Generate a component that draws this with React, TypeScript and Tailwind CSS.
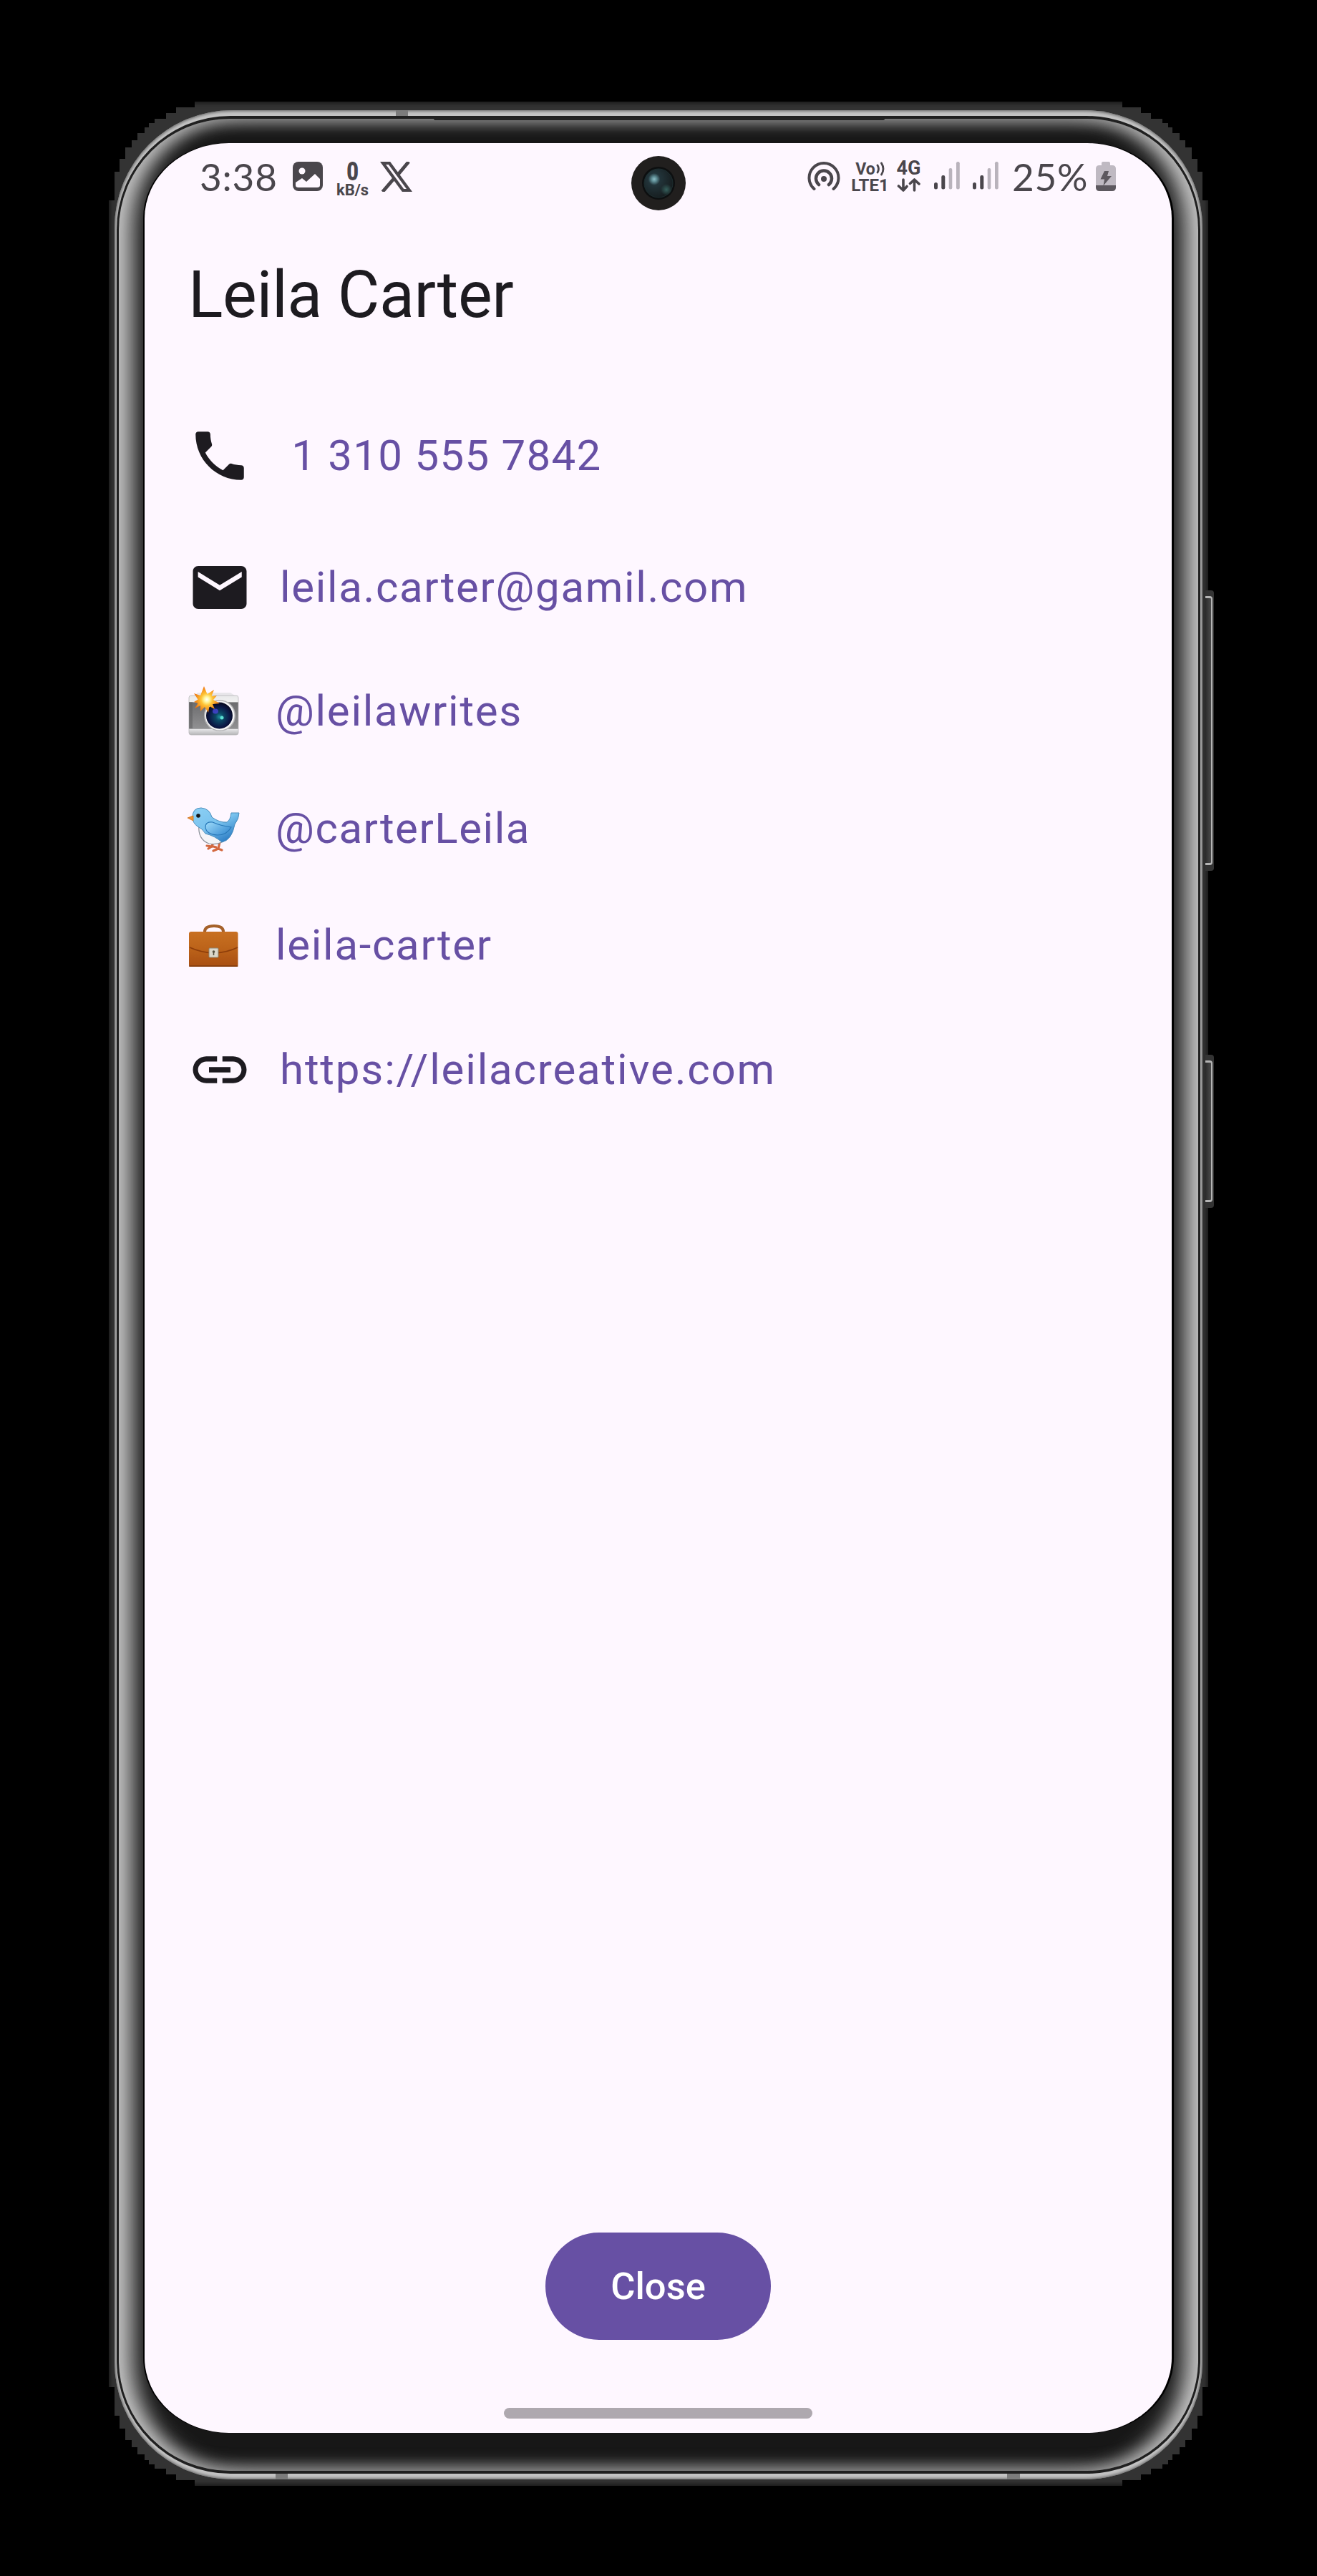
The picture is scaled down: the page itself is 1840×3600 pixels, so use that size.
import React from "react";

// Stepped corner of the outer shade, from the left edge up to the top edge.
const STEPS: [number, number][] = [
  [0, 138], [8, 138], [8, 98], [15, 98], [15, 80], [23, 80], [23, 64], [32, 64],
  [32, 54], [40, 54], [40, 44], [50, 44], [50, 36], [56, 36], [56, 30], [64, 30],
  [64, 24], [80, 24], [80, 16], [94, 16], [94, 8], [120, 8], [120, 0],
];
const SHADE_W = 1536;
const SHADE_H = 3332;

function shadeOutline() {
  const back = [...STEPS].reverse();
  const points = [
    ...STEPS,
    ...back.map(([x, y]) => [SHADE_W - x, y]),
    ...STEPS.map(([x, y]) => [SHADE_W - x, SHADE_H - y]),
    ...back.map(([x, y]) => [x, SHADE_H - y]),
  ];
  return `polygon(${points.map(([x, y]) => `${x}px ${y}px`).join(", ")})`;
}

function SideKey({ className }: { className: string }) {
  return (
    <div className={`absolute left-[1532px] w-[12px] rounded-r-[4px] bg-[#333] py-[8px] pr-[2px] ${className}`}>
      <div className="h-full w-full rounded-r-[4px] border-y-[3px] border-r-[2px] border-[#b4b4b4] bg-linear-to-r from-[#2c2c2c] to-[#4a4a4a]" />
    </div>
  );
}

function PictureIcon() {
  return (
    <svg className="h-[41px] w-[42px]" viewBox="0 0 42 41">
      <rect width="42" height="41" rx="8" fill="#4a464c" />
      <circle cx="13" cy="13" r="4.5" fill="#fef7ff" />
      <path d="M4 29 L13 23 L19 28 L31 17 L38 24 V33 Q38 36 34 36 H8 Q4 36 4 33 Z" fill="#fef7ff" />
    </svg>
  );
}

function XLogo() {
  return (
    <svg className="h-[42px] w-[45px]" viewBox="0 0 45 42" fill="none" stroke="#4a464c">
      <path d="M4 2 H13 L41 40 H32 Z" strokeWidth="4.2" />
      <path d="M40 0 L25 18 M19 24 L3.500 42" strokeWidth="4.800" />
    </svg>
  );
}

function Hotspot() {
  return (
    <svg className="h-[42px] w-[46px]" viewBox="0 0 46 42" fill="none" stroke="#4a464c" strokeLinecap="round">
      <circle cx="23" cy="24" r="4" fill="#4a464c" stroke="none" />
      <path d="M16 32 A11 11 0 1 1 30 32" strokeWidth="4.5" />
      <path d="M9.500 38 A20.500 20.500 0 1 1 36.500 38" strokeWidth="4" />
    </svg>
  );
}

function Signal() {
  return (
    <svg className="h-[39px] w-[36px]" viewBox="0 0 36 39">
      <rect x="0" y="29" width="5" height="9.500" rx="2.500" fill="#4a464c" />
      <rect x="10.300" y="19" width="5" height="19.500" rx="2.200" fill="#4a464c" />
      <rect x="20.700" y="9" width="4.600" height="29.500" rx="2.200" fill="#b9b3bc" />
      <rect x="31" y="0" width="4.800" height="38.500" rx="2.200" fill="#b9b3bc" />
    </svg>
  );
}

function Battery() {
  return (
    <svg className="h-[41px] w-[28px]" viewBox="0 0 28 41">
      <path d="M8 5 V2 Q8 0 10 0 H18 Q20 0 20 2 V5 H23 Q28 5 28 10 V33 H0 V10 Q0 5 5 5 Z" fill="#bfb9c2" />
      <path d="M0 33 H28 V36 Q28 41 23 41 H5 Q0 41 0 36 Z" fill="#5d585f" />
      <path d="M12 13 H18 L16 20 H22 L10.500 33.500 L12 24.500 H6.500 Z" fill="#5d585f" />
    </svg>
  );
}

function DataArrows() {
  return (
    <svg className="h-[19px] w-[33px]" viewBox="0 0 33 19" fill="none" stroke="#4a464c" strokeWidth="3.6" strokeLinecap="round" strokeLinejoin="round">
      <path d="M9 2 V17 M2.500 11 L9 17 L14 11.500" />
      <path d="M24.500 17 V2 M18.500 7.500 L24.500 2 L31 8" />
    </svg>
  );
}

function CameraHole() {
  return (
    <svg className="absolute left-[680px] top-[18px] h-[76px] w-[76px]" viewBox="0 0 76 76">
      <defs>
        <radialGradient id="lens" cx="0.35" cy="0.36" r="0.7">
          <stop offset="0" stopColor="#8fc0c8" />
          <stop offset="0.13" stopColor="#5c8a92" />
          <stop offset="0.3" stopColor="#22343a" />
          <stop offset="1" stopColor="#161c1e" />
        </radialGradient>
        <radialGradient id="lensGlow">
          <stop offset="0" stopColor="#35605c" />
          <stop offset="1" stopColor="#35605c" stopOpacity="0" />
        </radialGradient>
      </defs>
      <circle cx="38" cy="38" r="38" fill="#211f1e" />
      <circle cx="38" cy="38" r="23" fill="#0d0f10" />
      <circle cx="38" cy="38" r="20" fill="url(#lens)" stroke="#1d2e30" strokeWidth="1" />
      <circle cx="49" cy="47" r="8" fill="url(#lensGlow)" />
    </svg>
  );
}

function StatusBar() {
  return (
    <div className="flex h-[96px] items-start justify-between pl-[77px] pr-[78px] pt-[26px] text-[#4a464c]">
      <div className="flex items-start">
        <span className="w-[108px] whitespace-nowrap font-['Lato'] text-[53px] leading-[41px] tracking-[0.800px]">3:38</span>
        <div className="ml-[22px]"><PictureIcon /></div>
        <div className="ml-[19px] flex w-[45px] flex-col items-center font-['Roboto'] font-bold">
          <span className="scale-x-[0.78] text-[37px] font-black leading-[27px]">0</span>
          <span className="mt-[4px] text-[22px] leading-[17px]">kB/s</span>
        </div>
        <div className="ml-[16px]"><XLogo /></div>
      </div>
      <div className="flex items-start">
        <Hotspot />
        <div className="ml-[17px] flex w-[49px] flex-col items-center font-['Roboto'] font-bold">
          <span className="flex items-center gap-[1px] text-[23px] leading-[19px]">
            Vo
            <svg className="h-[20px] w-[12px]" viewBox="0 0 12 20" fill="none" stroke="#4a464c" strokeWidth="2.800" strokeLinecap="round">
              <path d="M2 5 Q5 10 2 15 M7.500 2 Q12.500 10 7.500 18" />
            </svg>
          </span>
          <span className="mt-[4px] text-[24px] leading-[18px]">LTE1</span>
        </div>
        <div className="ml-[13px] flex w-[33px] flex-col items-center font-['Roboto'] font-bold">
          <span className="text-[27px] leading-[19px]">4G</span>
          <div className="mt-[4px]"><DataArrows /></div>
        </div>
        <div className="ml-[19px]"><Signal /></div>
        <div className="ml-[18px]"><Signal /></div>
        <span className="ml-[19px] w-[109px] whitespace-nowrap font-['Lato'] text-[53px] leading-[41px] tracking-[0.800px]">25%</span>
        <div className="ml-[8px]"><Battery /></div>
      </div>
    </div>
  );
}

function PhoneIcon() {
  return (
    <svg className="h-[90px] w-[90px]" viewBox="0 0 24 24" fill="#1d1b20">
      <path d="M6.620 10.790c1.440 2.830 3.760 5.140 6.590 6.590l2.200-2.200c.27-.27.67-.36 1.020-.24 1.120.37 2.330.57 3.570.57.550 0 1 .45 1 1V20c0 .550-.45 1-1 1C10.610 21 3 13.390 3 4c0-.55.45-1 1-1h3.500c.550 0 1 .45 1 1 0 1.250.2 2.450.57 3.570.11.350.03.740-.25 1.020l-2.200 2.200z" />
    </svg>
  );
}

function MailIcon() {
  return (
    <svg className="h-[90px] w-[90px]" viewBox="0 0 24 24" fill="#1d1b20">
      <path d="M20 4H4c-1.100 0-1.990.9-1.990 2L2 18c0 1.100.9 2 2 2h16c1.100 0 2-.9 2-2V6c0-1.100-.9-2-2-2zm.2 4.100L12 13.100 3.900 8.100V6.100L12 11.100l8.200-5z" />
    </svg>
  );
}

function LinkIcon() {
  return (
    <svg className="h-[90px] w-[90px]" viewBox="0 0 24 24" fill="#1d1b20">
      <path d="M3.900 12c0-1.710 1.390-3.100 3.100-3.100h4V7H7c-2.760 0-5 2.240-5 5s2.240 5 5 5h4v-1.900H7c-1.710 0-3.100-1.390-3.100-3.100zM8 13h8v-2H8v2zm9-6h-4v1.900h4c1.710 0 3.100 1.390 3.100 3.100s-1.390 3.100-3.100 3.100h-4V17h4c2.760 0 5-2.240 5-5s-2.240-5-5-5z" />
    </svg>
  );
}

function CameraEmoji() {
  return (
    <svg className="h-[70px] w-[74px]" viewBox="0 0 74 70">
      <defs>
        <linearGradient id="camBody" x1="0" y1="0" x2="0" y2="1">
          <stop offset="0" stopColor="#e9e9ea" />
          <stop offset="0.16" stopColor="#f0f0f0" />
          <stop offset="0.18" stopColor="#6c6c6e" />
          <stop offset="0.84" stopColor="#909092" />
          <stop offset="0.86" stopColor="#e4e4e6" />
          <stop offset="1" stopColor="#b5b5b7" />
        </linearGradient>
        <radialGradient id="camLens" cx="0.5" cy="0.55" r="0.55">
          <stop offset="0" stopColor="#1d8f9c" />
          <stop offset="0.25" stopColor="#0c4a66" />
          <stop offset="0.7" stopColor="#0b1846" />
          <stop offset="1" stopColor="#06071c" />
        </radialGradient>
        <radialGradient id="camFlash">
          <stop offset="0" stopColor="#ffffff" />
          <stop offset="0.2" stopColor="#fff7a0" />
          <stop offset="0.45" stopColor="#ffc436" />
          <stop offset="1" stopColor="#ee7410" />
        </radialGradient>
      </defs>
      <path d="M8 15 L14 9 H60 L66 13 Z" fill="#e8e6ea" />
      <rect x="2" y="13" width="69" height="55" rx="3" fill="url(#camBody)" stroke="#b9b7ba" strokeWidth="0.800" />
      <rect x="2" y="22" width="5" height="37" fill="#58585a" opacity="0.5" />
      <circle cx="45" cy="41" r="22" fill="#b4b4b6" />
      <circle cx="45" cy="41" r="20.500" fill="#f5f5f6" />
      <circle cx="44.500" cy="41" r="18.500" fill="url(#camLens)" />
      <ellipse cx="39" cy="35" rx="4" ry="3.500" fill="#4c45dd" opacity="0.750" />
      <circle cx="48" cy="44" r="2.500" fill="#5ce0d2" />
      <path d="M23 0 L27.500 11 L37 5 L33.500 14 L41 13 L36 19 L45 24 L35 25 L38 32 L30.500 28 L29 37 L24 29 L18 35 L18 27 L10 31 L14.500 24 L9 22 L14.500 18.500 L9 10 L18 13 Z" fill="url(#camFlash)" />
    </svg>
  );
}

function BirdEmoji() {
  return (
    <svg className="h-[70px] w-[74px]" viewBox="0 0 74 70">
      <defs>
        <linearGradient id="birdBody" x1="0" y1="0" x2="0.7" y2="1">
          <stop offset="0" stopColor="#8cd0f4" />
          <stop offset="0.55" stopColor="#79c2ee" />
          <stop offset="1" stopColor="#2b7cc4" />
        </linearGradient>
        <linearGradient id="birdWing" x1="0" y1="0" x2="1" y2="0.7">
          <stop offset="0" stopColor="#a0dcfa" />
          <stop offset="1" stopColor="#3c90d4" />
        </linearGradient>
      </defs>
      <path d="M36 54 L34 60 L27 59 M34 60 L29 63 M45 54 L43 63 L36 66 M43 63 L48 65 M36 60 L40 61" fill="none" stroke="#d3683f" strokeWidth="3.200" strokeLinecap="round" />
      <path d="M16 30 Q14 50 30 56 Q45 59 56 48 L30 33 Z" fill="#f4f5f8" stroke="#8b9099" strokeWidth="1.200" />
      <path d="M7 19 Q7 6 19 6 Q31 7 34 19 Q45 27 55 26 Q60 23 61 13 L72 13 Q72 21 66 29 Q62 51 48 54 Q38 45 25 42 Q21 35 14 32 Q7 27 7 19 Z" fill="url(#birdBody)" stroke="#4a8dbb" strokeWidth="1" />
      <path d="M25 33 Q25 25 35 26 Q46 31 61 33 Q55 44 42 44 Q26 43 25 33 Z" fill="url(#birdWing)" stroke="#2878b8" strokeWidth="1.200" />
      <path d="M8 17 L0 20 L8 24 Z" fill="#f0922f" stroke="#c97120" strokeWidth="0.800" />
      <circle cx="15" cy="17" r="2.800" fill="#161616" />
    </svg>
  );
}

function BriefcaseEmoji() {
  return (
    <svg className="h-[70px] w-[74px]" viewBox="0 0 74 70">
      <defs>
        <linearGradient id="caseBody" x1="0" y1="0" x2="0" y2="1">
          <stop offset="0" stopColor="#c87022" />
          <stop offset="0.45" stopColor="#bd641a" />
          <stop offset="1" stopColor="#a84e12" />
        </linearGradient>
      </defs>
      <path d="M24 16 Q24 8 37 8 Q50 8 50 16" fill="none" stroke="#a5612a" strokeWidth="4" />
      <rect x="2" y="16" width="68.500" height="49" rx="3" fill="url(#caseBody)" />
      <path d="M3 38 Q18 45 37 46 Q56 45 70 38" fill="none" stroke="#8d3d0a" strokeWidth="1.800" />
      <rect x="2" y="63" width="68.500" height="2" rx="1" fill="#8a400e" />
      <rect x="30" y="39" width="13" height="13" rx="1" fill="#dcd8cc" stroke="#8d8470" strokeWidth="1" />
      <circle cx="36.500" cy="44" r="1.800" fill="#55503f" />
      <rect x="35.700" y="44" width="1.600" height="5" fill="#55503f" />
    </svg>
  );
}

function ContactRow({
  icon,
  text,
  tracking,
  emoji = false,
}: {
  icon: React.ReactNode;
  text: string;
  tracking: string;
  emoji?: boolean;
}) {
  return (
    <div className={emoji ? "flex h-[90px] items-center gap-[49px]" : "flex h-[110px] items-center gap-[39px]"}>
      {icon}
      <a className={`whitespace-pre text-[60px] leading-[90px] text-[#6750a4] ${tracking}`}>{text}</a>
    </div>
  );
}

export default function App() {
  return (
    <div className="h-[3600px] w-[1840px] overflow-hidden bg-black pl-[152px] pt-[142px] font-['Roboto',sans-serif]">
      <div className="relative h-[3332px] w-[1536px] px-[8px] pb-[9px] pt-[12px]">
        <div
          className="absolute inset-0 bg-[#333333] shadow-[inset_0_0_6px_2px_#161616]"
          style={{ clipPath: shadeOutline() }}
        />
        <SideKey className="top-[683px] h-[392px]" />
        <SideKey className="top-[1332px] h-[214px]" />

        {/* Metal rim */}
        <div className="relative h-[3311px] w-[1520px] rounded-[164px] bg-[#c4c4c4] px-[3px] py-[8px] shadow-[inset_0_0_4px_1px_#5c5c5c]">
          <div className="absolute left-[393px] top-0 h-[8px] w-[17px] bg-[#7c7c7c]" />
          <div className="absolute bottom-0 left-[225px] h-[8px] w-[17px] bg-[#7c7c7c]" />
          <div className="absolute bottom-0 left-[1247px] h-[8px] w-[18px] bg-[#7c7c7c]" />
          <div className="h-full w-full rounded-[159px] bg-[#202020] px-[3px] py-[4px]">
            {/* Bevel between the rim and the display */}
            <div className="relative h-full w-full rounded-[155px] bg-[#171717] px-[34px] pb-[53px] pt-[34px] shadow-[inset_34px_0_30px_-14px_#c2c2c2,inset_-34px_0_30px_-14px_#c2c2c2,inset_0_19px_20px_-10px_#6a6a6a,inset_0_-19px_20px_-10px_#6a6a6a]">
              <div className="absolute left-[440px] top-[-2px] h-[4px] w-[630px] rounded-full bg-[#222222]" />
              <div className="h-full w-full rounded-[118px/105px] bg-black pl-[2px] pr-[3px]">
                <div className="relative flex h-full w-full flex-col overflow-hidden rounded-[118px/105px] bg-[#fef7ff]">
                  <StatusBar />
                  <CameraHole />
                  <main className="flex flex-1 flex-col pl-[60px]">
                    <h1 className="mt-[57px] pl-[1px] text-[90px] leading-[120px] tracking-[-0.400px] text-[#1d1b20]">Leila Carter</h1>
                    <div className="mt-[109px] flex flex-col gap-[73.500px]">
                      <ContactRow icon={<PhoneIcon />} text=" 1 310 555 7842" tracking="tracking-[1.270px]" />
                      <ContactRow icon={<MailIcon />} text="leila.carter@gamil.com" tracking="tracking-[1.660px]" />
                      <ContactRow emoji icon={<CameraEmoji />} text="@leilawrites" tracking="tracking-[1.700px]" />
                      <ContactRow emoji icon={<BirdEmoji />} text="@carterLeila" tracking="tracking-[1.550px]" />
                      <ContactRow emoji icon={<BriefcaseEmoji />} text="leila-carter" tracking="tracking-[1.700px]" />
                      <ContactRow icon={<LinkIcon />} text="https://leilacreative.com" tracking="tracking-[1.840px]" />
                    </div>
                  </main>
                  <footer className="flex flex-col items-center pb-[20px]">
                    <button className="h-[150px] w-[315px] rounded-full bg-[#6750a4] text-[52.500px] font-medium text-white">
                      Close
                    </button>
                    <div className="mt-[95px] h-[15px] w-[431px] rounded-full bg-[#aea8af]" />
                  </footer>
                </div>
              </div>
            </div>
          </div>
        </div>
      </div>
    </div>
  );
}
